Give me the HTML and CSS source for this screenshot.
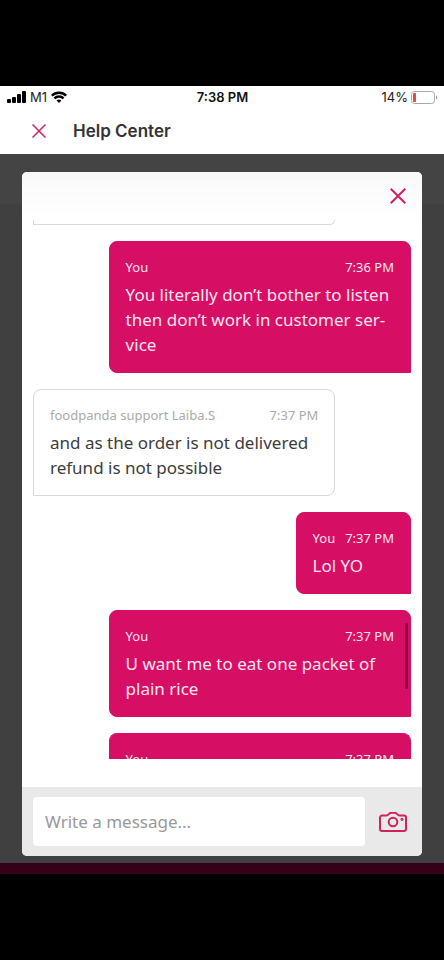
FILE: index.html
```html
<!DOCTYPE html>
<html lang="en">
<head>
<meta charset="utf-8">
<meta name="viewport" content="width=device-width, initial-scale=1">
<title>Help Center</title>
<link rel="stylesheet" href="styles.css">
</head>
<body>
<div class="screen">
  <div class="status">
    <div class="status-left">
      <svg width="19" height="12" viewBox="0 0 19 12" aria-hidden="true"><rect x="0" y="8" width="4" height="4" rx="1"/><rect x="5" y="6" width="4" height="6" rx="1"/><rect x="10" y="3" width="4" height="9" rx="1"/><rect x="15" y="0" width="4" height="12" rx="1"/></svg>
      <span>M1</span>
      <svg width="16" height="12" viewBox="0 0 16 12" fill="none" stroke="#000" stroke-width="2.4" aria-hidden="true"><path d="M.8 4.6a10.4 10.4 0 0 1 14.4 0M3.4 7.4a6.6 6.6 0 0 1 9.2 0"/><path d="M8 12 5.6 9.6a3.5 3.5 0 0 1 4.8 0z" fill="#000" stroke="none"/></svg>
    </div>
    <span class="clock">7:38 PM</span>
    <div class="status-right">
      <span>14%</span>
      <svg width="27" height="13" viewBox="0 0 27 13" aria-hidden="true"><rect x=".5" y=".5" width="23" height="12" rx="3" fill="#fff" stroke="#aaa"/><rect x="2" y="2" width="3" height="9" rx="1" fill="#e9473f"/><path d="M25 4.5c1.8.6 1.8 3.400 0 4z" fill="#999"/></svg>
    </div>
  </div>
  <header class="header">
    <button class="icon-button" aria-label="Close help center"><svg width="14" height="14" viewBox="0 0 14 14"><path d="M.5.5l13 13M13.500.5l-13 13"/></svg></button>
    <h1>Help Center</h1>
  </header>
  <main class="backdrop">
    <section class="chat" aria-label="Chat">
      <div class="chat-top">
        <button class="icon-button strong" aria-label="Close chat"><svg width="16" height="16" viewBox="0 0 16 16"><path d="M.7.7l14.600 14.600M15.300.7l-14.600 14.600"/></svg></button>
      </div>
      <div class="messages">
        <div class="scroll-thumb"></div>
        <div class="bubble agent tail"></div>
        <article class="bubble mine">
          <div class="meta"><span>You</span><time>7:36 PM</time></div>
          <p>You literally don’t bother to listen then don’t work in customer ser&shy;vice</p>
        </article>
        <article class="bubble agent">
          <div class="meta"><span>foodpanda support Laiba.S</span><time>7:37 PM</time></div>
          <p>and as the order is not delivered refund is not possible</p>
        </article>
        <article class="bubble mine short">
          <div class="meta"><span>You</span><time>7:37 PM</time></div>
          <p>Lol YO</p>
        </article>
        <article class="bubble mine">
          <div class="meta"><span>You</span><time>7:37 PM</time></div>
          <p>U want me to eat one packet of plain rice</p>
        </article>
        <article class="bubble mine cut">
          <div class="meta"><span>You</span><time>7:37 PM</time></div>
        </article>
      </div>
      <form class="composer">
        <input type="text" placeholder="Write a message..." aria-label="Write a message">
        <button class="icon-button camera" type="button" aria-label="Send a photo"><svg width="28" height="20" viewBox="0 0 28 20"><path d="M3 3.500h4.500c2.200 0 2.500-2.700 4.700-2.700h3.600c2.200 0 2.500 2.700 4.700 2.700H25a2 2 0 0 1 2 2V17a2 2 0 0 1-2 2H3a2 2 0 0 1-2-2V5.500a2 2 0 0 1 2-2z"/><circle cx="14" cy="10" r="4.300"/><circle cx="23" cy="7.300" r=".6"/></svg></button>
      </form>
    </section>
  </main>
  <div class="bottom-strip"></div>
</div>
</body>
</html>
```
FILE: styles.css
```css
* { box-sizing: border-box; }
body {
  margin: 0;
  background: #000;
  font-family: "Noto Sans", "Open Sans", sans-serif;
}
.screen { padding: 86px 0; }
.status {
  display: grid;
  grid-template-columns: 1fr auto 1fr;
  align-items: center;
  height: 22px;
  padding: 0 6px 0 7px;
  background: #fff;
  color: #222;
  font: 13px/22px Inter, sans-serif;
}
.status-left, .status-right { display: flex; align-items: center; gap: 4px; }
.status-right { justify-content: flex-end; gap: 3px; }
.clock { font-weight: 600; color: #111; }
.header {
  display: flex;
  align-items: center;
  gap: 27px;
  height: 46px;
  padding: 0 32px;
  background: #fff;
}
.header h1 {
  margin: 0;
  font: 600 17px/24px Inter, sans-serif;
  color: #333;
}
.icon-button {
  display: flex;
  padding: 0;
  border: 0;
  background: none;
}
.icon-button svg {
  fill: none;
  stroke: #d0225f;
  stroke-width: 1.500;
}
.strong svg { stroke-width: 2; }
.backdrop {
  padding: 18px 22px 7px;
  background: linear-gradient(#444 0, #444 50px, #404040 51px);
}
.chat {
  overflow: hidden;
  border-radius: 5px;
  background: #fff;
}
.chat-top {
  display: flex;
  align-items: center;
  justify-content: flex-end;
  height: 48px;
  padding: 0 16px;
  background: linear-gradient(#f9f9f9, #fff);
}
.messages {
  position: relative;
  display: flex;
  flex-direction: column;
  gap: 16px;
  margin-bottom: 28px;
  padding: 0 11px;
}
.bubble {
  width: 80%;
  padding: 15px 16px 15px;
  border: 1px solid #d8d8d8;
  font-size: 17px;
  line-height: 25px;
}
.bubble p { margin: 0; hyphens: manual; }
.mine {
  align-self: flex-end;
  border-color: #d60f64;
  border-radius: 8px 8px 0 8px;
  background: #d60f64;
  color: #ffe3f0;
}
.agent {
  border-radius: 8px 8px 8px 0;
  color: #3c3c3c;
}
.short { width: auto; }
.tail { height: 5px; padding: 0; border-top: 0; border-radius: 0 0 8px 0; }
.cut { height: 26px; padding-bottom: 0; border-bottom: 0; border-radius: 8px 8px 0 0; overflow: hidden; }
.meta {
  display: flex;
  justify-content: space-between;
  gap: 10px;
  margin-bottom: 5px;
  font-size: 13px;
  line-height: 20px;
}
.agent .meta { color: #aaa; }
.scroll-thumb {
  position: absolute;
  right: 14px;
  bottom: 70px;
  width: 3px;
  height: 66px;
  border-radius: 2px;
  background: #87073f;
}
.composer {
  display: flex;
  align-items: center;
  gap: 14px;
  padding: 10px 15px 10px 11px;
  background: #e9e9e9;
}
.composer input {
  flex: 1;
  min-width: 0;
  height: 49px;
  padding: 0 12px;
  border: 0;
  border-radius: 4px;
  background: #fff;
  color: #3c3c3c;
  font: 17px/25px "Noto Sans", sans-serif;
}
.composer input::placeholder { color: #999; opacity: 1; }
.camera svg { stroke-width: 2; }
.bottom-strip { height: 11px; background: #350019; }
```
